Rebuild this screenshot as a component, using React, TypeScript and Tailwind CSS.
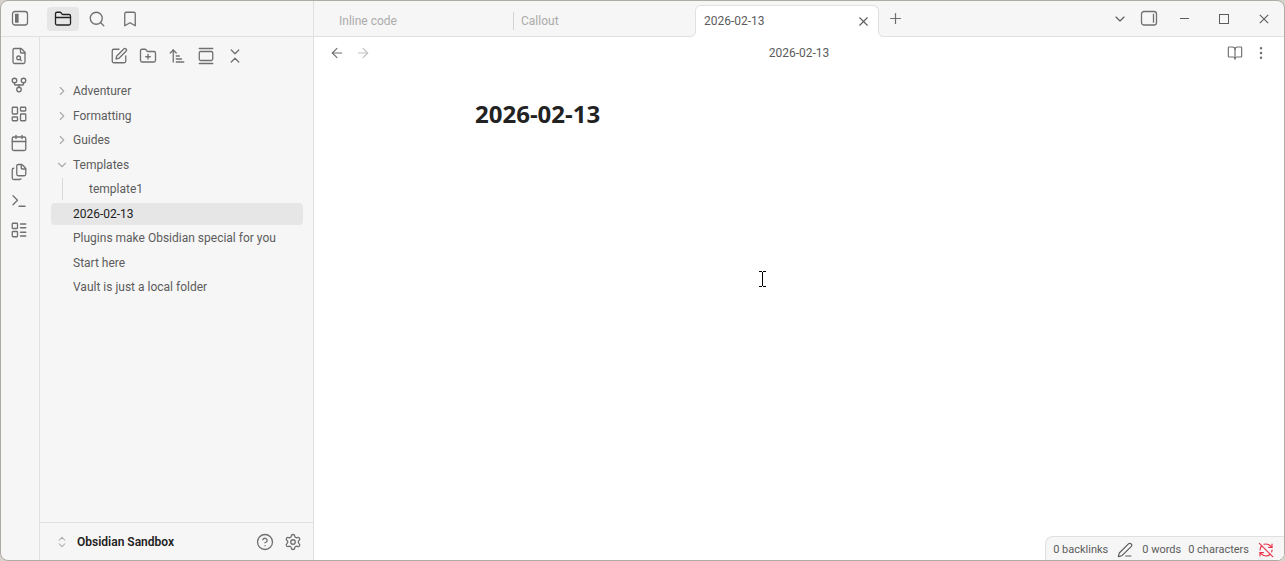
import React from 'react';
import {
  ArrowLeft,
  ArrowRight,
  ArrowUpNarrowWide,
  Bookmark,
  BookOpen,
  Calendar,
  ChevronDown,
  ChevronRight,
  ChevronsDownUp,
  ChevronsUpDown,
  CircleQuestionMark,
  EllipsisVertical,
  Files,
  FileSearch,
  FolderClosed,
  FolderPlus,
  GalleryVertical,
  GitFork,
  LayoutDashboard,
  LayoutList,
  PenLine,
  Plus,
  RefreshCwOff,
  Search,
  Settings,
  SquarePen,
  Terminal,
  X,
} from 'lucide-react';

type IconType = React.ComponentType<{ size?: number; strokeWidth?: number; className?: string }>;

interface IconButtonProps {
  icon: IconType;
  label: string;
  size?: number;
  className?: string;
}

const IconButton: React.FC<IconButtonProps> = ({ icon: Icon, label, size = 18, className = 'text-[#707070]' }) => (
  <button type="button" aria-label={label} className={`flex shrink-0 items-center justify-center ${className}`}>
    <Icon size={size} strokeWidth={1.75} />
  </button>
);

const SidebarToggle: React.FC<{ side: 'left' | 'right' }> = ({ side }) => (
  <svg width="18" height="18" viewBox="0 0 18 18" fill="none" stroke="#707070" strokeWidth="1.3">
    <rect x="1.5" y="1.5" width="15" height="13.5" rx="2.5" />
    {side === 'left' ? (
      <rect x="4" y="3.8" width="3.6" height="9" rx="0.5" fill="#707070" stroke="none" />
    ) : (
      <path d="M13.5 3.8v9" />
    )}
  </svg>
);

const ribbon: { icon: IconType; label: string }[] = [
  { icon: FileSearch, label: 'Open quick switcher' },
  { icon: GitFork, label: 'Open graph view' },
  { icon: LayoutDashboard, label: 'Create new canvas' },
  { icon: Calendar, label: "Open today's daily note" },
  { icon: Files, label: 'Insert template' },
  { icon: Terminal, label: 'Open command palette' },
  { icon: LayoutList, label: 'Create new base' },
];

const explorerActions: { icon: IconType; label: string }[] = [
  { icon: SquarePen, label: 'New note' },
  { icon: FolderPlus, label: 'New folder' },
  { icon: ArrowUpNarrowWide, label: 'Change sort order' },
  { icon: GalleryVertical, label: 'Auto-reveal current file' },
  { icon: ChevronsDownUp, label: 'Collapse all' },
];

interface TreeItem {
  name: string;
  kind: 'closed' | 'open' | 'file' | 'child';
  active?: boolean;
}

const tree: TreeItem[] = [
  { name: 'Adventurer', kind: 'closed' },
  { name: 'Formatting', kind: 'closed' },
  { name: 'Guides', kind: 'closed' },
  { name: 'Templates', kind: 'open' },
  { name: 'template1', kind: 'child' },
  { name: '2026-02-13', kind: 'file', active: true },
  { name: 'Plugins make Obsidian special for you', kind: 'file' },
  { name: 'Start here', kind: 'file' },
  { name: 'Vault is just a local folder', kind: 'file' },
];

const TreeRow: React.FC<{ item: TreeItem }> = ({ item }) => (
  <li className="h-[22px]">
    <button
      type="button"
      className={`flex h-full w-full items-center rounded text-left ${
        item.active ? 'bg-[#e6e6e6] text-[#222222]' : 'text-[#5c5c5c]'
      }`}
    >
      <span className="flex h-full w-[22px] shrink-0 items-center justify-center text-[#ababab]">
        {item.kind === 'closed' && <ChevronRight size={14} strokeWidth={2} />}
        {item.kind === 'open' && <ChevronDown size={14} strokeWidth={2} />}
        {item.kind === 'child' && <span className="h-full w-px bg-[#d8d8d8]" />}
      </span>
      <span className={item.kind === 'child' ? 'pl-4' : ''}>{item.name}</span>
    </button>
  </li>
);

const Sidebar: React.FC = () => (
  <aside className="flex min-w-0 flex-1 flex-col border-l border-[#e0e0e0]">
    <div className="flex h-[38px] items-center justify-center gap-[11px]">
      {explorerActions.map((a) => (
        <IconButton key={a.label} icon={a.icon} label={a.label} />
      ))}
    </div>
    <ul className="mt-[5px] ml-[11px] mr-[10px] flex h-[218px] flex-col justify-between">
      {tree.map((item) => (
        <TreeRow key={item.name} item={item} />
      ))}
    </ul>
    <div className="mt-auto flex h-[38px] items-center border-t border-[#e0e0e0] pl-[15px] pr-[11px]">
      <button type="button" className="flex items-center gap-2 font-semibold text-[#222222]">
        <ChevronsUpDown size={14} strokeWidth={1.75} className="text-[#ababab]" />
        Obsidian Sandbox
      </button>
      <div className="ml-auto flex gap-[10px]">
        <IconButton icon={CircleQuestionMark} label="Help" />
        <IconButton icon={Settings} label="Settings" />
      </div>
    </div>
  </aside>
);

// Small outward curve where the active tab meets the view below it
const TabFoot: React.FC<{ side: 'left' | 'right' }> = ({ side }) => (
  <svg
    width="6"
    height="6"
    viewBox="0 0 6 6"
    className={side === 'left' ? 'absolute bottom-0 -left-1.5' : 'absolute bottom-0 -right-1.5 -scale-x-100'}
  >
    <path d="M6 0v6H0v-.5C3.5 5.5 5.5 3.5 5.5 0z" fill="#ffffff" />
    <path d="M0 5.5C3.5 5.5 5.5 3.5 5.5 0" fill="none" stroke="#e0e0e0" />
  </svg>
);

const TabBar: React.FC = () => (
  <div className="flex h-9 shrink-0 border-b border-[#e0e0e0] pl-[17px]">
    <div className="flex w-[183px] items-center">
      <button type="button" className="flex-1 pt-1 pl-2 text-left text-[#ababab]">
        Inline code
      </button>
      <span className="mt-1 h-[18px] w-px bg-[#d4d4d4]" />
    </div>
    <div className="flex w-[181px] items-center">
      <button type="button" className="flex-1 pt-1 pl-[7px] text-left text-[#ababab]">
        Callout
      </button>
    </div>
    <div className="relative mt-1 -mb-px flex w-[184px] items-center rounded-t-md border border-b-0 border-[#e0e0e0] bg-white pb-px">
      <TabFoot side="left" />
      <button type="button" className="flex-1 pl-2 text-left text-[#5c5c5c]">
        2026-02-13
      </button>
      <IconButton icon={X} label="Close" size={15} className="w-[30px] text-[#5c5c5c]" />
      <TabFoot side="right" />
    </div>
    <IconButton icon={Plus} label="New tab" size={17} className="w-8 text-[#707070]" />
    <div className="ml-auto flex">
      <IconButton icon={ChevronDown} label="Tab list" size={16} className="w-7 text-[#5c5c5c]" />
      <button type="button" aria-label="Expand right sidebar" className="flex w-[30px] items-center justify-center">
        <SidebarToggle side="right" />
      </button>
      <button type="button" aria-label="Minimize" className="flex w-10 items-center justify-center">
        <span className="h-px w-[9px] bg-[#5c5c5c]" />
      </button>
      <button type="button" aria-label="Maximize" className="flex w-10 items-center justify-center">
        <span className="h-[10px] w-[10px] border border-[#5c5c5c]" />
      </button>
      <button type="button" aria-label="Close window" className="flex w-10 items-center justify-center">
        <svg width="10" height="10" viewBox="0 0 10 10" stroke="#5c5c5c" strokeWidth="1.1">
          <path d="M.8.8l8.4 8.4M9.2.8L.8 9.2" />
        </svg>
      </button>
    </div>
  </div>
);

const StatusBar: React.FC = () => (
  <footer className="ml-auto flex h-6 items-center rounded-tl-lg border-t border-l border-[#e0e0e0] bg-[#f6f6f6] pt-0.5 pl-[7px] pr-[10px] text-[11px] text-[#5c5c5c]">
    <span>0 backlinks</span>
    <IconButton icon={PenLine} label="Editing view" size={16} className="ml-[9px] text-[#5c5c5c]" />
    <span className="ml-[9px]">0 words</span>
    <span className="ml-[7px]">0 characters</span>
    <IconButton icon={RefreshCwOff} label="Sync off" size={16} className="ml-[9px] text-[#e93147]" />
  </footer>
);

const App: React.FC = () => (
  <div className="h-screen bg-[#d6d3cb] font-['Roboto','Noto_Sans',sans-serif] text-[12px] leading-4">
    <div className="relative flex h-full overflow-hidden rounded-lg border border-[#aeaba4] bg-[#f6f6f6]">
      <div className="flex w-[313px] shrink-0 flex-col border-r border-[#e0e0e0]">
        <div className="flex h-9 items-center border-b border-[#e0e0e0] pl-[10px]">
          <button type="button" aria-label="Collapse left sidebar" className="mr-[18px]">
            <SidebarToggle side="left" />
          </button>
          <div className="flex gap-0.5">
            <IconButton icon={FolderClosed} label="Files" className="h-6 w-8 rounded bg-[#e6e6e6] text-[#222222]" />
            <IconButton icon={Search} label="Search" className="h-6 w-8 text-[#707070]" />
            <IconButton icon={Bookmark} label="Bookmarks" className="h-6 w-[30px] text-[#707070]" />
          </div>
        </div>
        <div className="flex min-h-0 flex-1">
          <nav className="flex w-[38px] flex-col items-center gap-[11px] pt-[10px] pr-0.5">
            {ribbon.map((r) => (
              <IconButton key={r.label} icon={r.icon} label={r.label} size={18} />
            ))}
          </nav>
          <Sidebar />
        </div>
      </div>

      <div className="flex min-w-0 flex-1 flex-col">
        <TabBar />
        <main className="flex min-h-0 flex-1 flex-col bg-white">
          <div className="flex h-8 items-center justify-between px-[15px]">
            <div className="flex gap-[10px]">
              <IconButton icon={ArrowLeft} label="Back" size={16} />
              <IconButton icon={ArrowRight} label="Forward" size={16} className="text-[#c0c0c0]" />
            </div>
            <span className="text-[#5c5c5c]">2026-02-13</span>
            <div className="flex gap-[10px]">
              <IconButton icon={BookOpen} label="Reading view" size={16} />
              <IconButton icon={EllipsisVertical} label="More options" size={16} />
            </div>
          </div>
          <article className="mx-auto w-full max-w-[648px] flex-1 pt-[29px]">
            <h1 className="font-['Open_Sans','Noto_Sans',sans-serif] text-2xl leading-8 font-bold text-[#222222]">
              2026-02-13
            </h1>
          </article>
          <StatusBar />
        </main>
      </div>

      {/* Text cursor */}
      <svg width="7" height="16" viewBox="0 0 7 16" className="absolute top-[270px] left-[758px]" shapeRendering="crispEdges">
        <path d="M0 0h3v1H0zM4 0h3v1H4zM3 1h1v14H3zM0 15h3v1H0zM4 15h3v1H4z" fill="#000000" />
      </svg>
    </div>
  </div>
);

export default App;
